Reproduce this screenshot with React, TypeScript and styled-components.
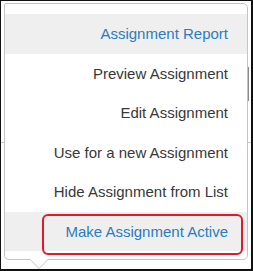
import { createGlobalStyle } from "styled-components"
import styled from "styled-components"

const GlobalStyle = createGlobalStyle`
    html, body {
        margin: 0;
        padding: 0;
        background: #ffffff;
    }
`

const Frame = styled.div`
    box-sizing: border-box;
    width: 253px;
    height: 271px;
    border-style: solid;
    border-color: #111;
    border-width: 1px 2px 2px 1px;
    background: #fff;
    position: relative;
    overflow: hidden;
    padding: 2px 0 0 3px;
`

// faint lines of the page that sits under the popover
const PageLine = styled.div<{ $top: number }>`
    position: absolute;
    left: 0;
    right: 0;
    top: ${(p) => p.$top}px;
    height: 1px;
    background: #c8c8c8;
`

const PageEdge = styled.div`
    position: absolute;
    left: 247px;
    top: 66px;
    width: 1px;
    height: 34px;
    background: #8a8a8a;
`

const Popover = styled.div`
    position: relative;
    z-index: 1;
    box-sizing: border-box;
    width: 244px;
    background: #fff;
    border: 1px solid #c4c4c4;
    border-radius: 2px 5px 5px 5px;
    padding: 10px 0 8px;
    display: flex;
    flex-direction: column;
    font-family: "Liberation Sans", Arial, sans-serif;
    font-size: 15px;

    &::after,
    &::before {
        content: "";
        position: absolute;
        left: 24px;
        width: 0;
        height: 0;
        border-left: 10px solid transparent;
        border-right: 10px solid transparent;
    }
    &::before {
        bottom: -10px;
        border-top: 10px solid #c4c4c4;
    }
    &::after {
        bottom: -9px;
        border-top: 10px solid #fff;
    }
`

const Item = styled.div<{ $active?: boolean; $link?: boolean }>`
    position: relative;
    height: 39.5px;
    display: flex;
    align-items: center;
    justify-content: flex-end;
    padding-right: 19px;
    background: ${(p) => (p.$active ? "#efefef" : "transparent")};
    color: ${(p) => (p.$link ? "#2b7cc0" : "#383838")};
    white-space: nowrap;
`

const Highlight = styled.div`
    position: absolute;
    left: 37px;
    right: 4px;
    top: 2px;
    bottom: -4px;
    border: 2.5px solid #e3192b;
    border-radius: 6px;
    pointer-events: none;
`

const items = [
    { label: "Preview Assignment" },
    { label: "Edit Assignment" },
    { label: "Use for a new Assignment" },
    { label: "Hide Assignment from List" },
]

export default function App() {
    return (
        <>
            <GlobalStyle />
            <Frame>
                <PageLine $top={141} />
                <PageEdge />
                <Popover>
                    <Item $active $link>
                        Assignment Report
                    </Item>
                    {items.map(({ label }) => (
                        <Item key={label}>{label}</Item>
                    ))}
                    <Item $active $link>
                        Make Assignment Active
                        <Highlight />
                    </Item>
                </Popover>
            </Frame>
        </>
    )
}
